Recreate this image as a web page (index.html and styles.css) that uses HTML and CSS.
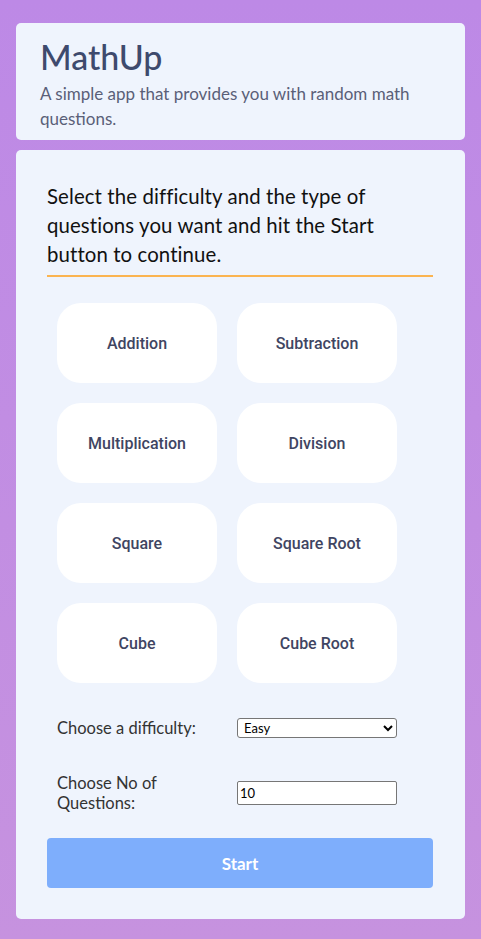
FILE: index.html
```html
<!DOCTYPE html>
<html lang="en">
<head>
<meta charset="utf-8">
<title>MathUp</title>
<link rel="stylesheet" href="styles.css">
</head>
<body>
<header class="card header">
  <h1 class="title">MathUp</h1>
  <p class="subtitle">A simple app that provides you with random math questions.</p>
</header>
<main class="card main">
  <p class="intro">Select the difficulty and the type of questions you want and hit the Start button to continue.</p>
  <div class="types">
    <button class="type">Addition</button>
    <button class="type">Subtraction</button>
    <button class="type">Multiplication</button>
    <button class="type">Division</button>
    <button class="type">Square</button>
    <button class="type">Square Root</button>
    <button class="type">Cube</button>
    <button class="type">Cube Root</button>
  </div>
  <div class="row row-first">
    <label class="label" for="diff">Choose a difficulty:</label>
    <select id="diff" class="select"><option>Easy</option><option>Medium</option><option>Hard</option></select>
  </div>
  <div class="row row-second">
    <label class="label" for="num">Choose No of Questions:</label>
    <input id="num" class="number" type="number" value="10">
  </div>
  <button class="start">Start</button>
</main>
</body>
</html>
```
FILE: styles.css
```css
html {
  min-height: 100%;
  background: linear-gradient(180deg, #bd89e6 0%, #c692df 100%);
}
body {
  margin: 0;
  padding: 23px 16px 20px;
  font-family: Lato, "Open Sans", sans-serif;
}
.card {
  background: #eff4fd;
  border-radius: 5px;
  width: 449px;
  box-sizing: border-box;
}
.header {
  padding: 12px 24px 9px;
}
.title {
  margin: 0;
  font-size: 34px;
  line-height: 43px;
  font-weight: 500;
  color: #3e4a6d;
}
.subtitle {
  margin: 4px 0 0;
  font-size: 17px;
  line-height: 24.5px;
  color: #5a5f78;
}
.main {
  margin-top: 10px;
  padding: 32px 32px 31px 31px;
}
.intro {
  margin: 0;
  padding-bottom: 7px;
  border-bottom: 2px solid #fbb451;
  font-size: 20.4px;
  letter-spacing: 0.1px;
  line-height: 28.8px;
  color: #111;
}
.types {
  display: grid;
  grid-template-columns: 160px 160px;
  gap: 20px;
  padding: 26px 10px 0;
}
.type {
  height: 80px;
  border: none;
  border-radius: 24px;
  background: #ffffff;
  font-family: Roboto, sans-serif;
  font-weight: 500;
  font-size: 16px;
  color: #3f4562;
  padding: 0;
}
.row {
  display: grid;
  grid-template-columns: 180px 160px;
  align-items: center;
  padding: 0 10px;
}
.row-first {
  margin-top: 35px;
}
.row-second {
  margin-top: 35px;
}
.label {
  max-width: 150px;
  font-size: 16.5px;
  line-height: 20px;
  color: #333;
}
.select {
  width: 160px;
  height: 20px;
  box-sizing: border-box;
  font-family: Lato, sans-serif;
  font-size: 13px;
  border: 1px solid #767676;
  border-radius: 3px;
  background: #fff;
  padding: 0 2px;
}
.number {
  width: 160px;
  height: 24px;
  box-sizing: border-box;
  font-family: Lato, sans-serif;
  font-size: 13px;
  border: 1px solid #767676;
  border-radius: 2px;
  background: #fff;
  padding: 1px 2px;
}
.start {
  display: block;
  width: 100%;
  height: 50px;
  margin-top: 25px;
  border: none;
  border-radius: 4px;
  background: #7eaefc;
  color: #fff;
  font-family: Lato, sans-serif;
  font-weight: 700;
  font-size: 17px;
}
```
